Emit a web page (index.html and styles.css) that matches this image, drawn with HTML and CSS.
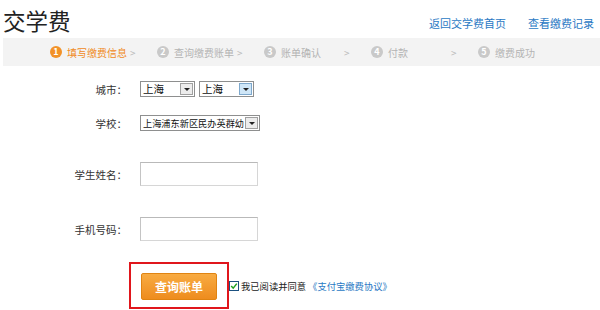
FILE: index.html
```html
<!DOCTYPE html>
<html lang="zh-CN">
<head>
    <meta charset="UTF-8">
    <title>交学费</title>
    <link rel="stylesheet" href="styles.css">
</head>
<body>
    <div class="header">
        <h1 class="title">交学费</h1>
        <div class="links">
            <a href="#">返回交学费首页</a>
            <a href="#">查看缴费记录</a>
        </div>
    </div>

    <div class="steps">
        <div class="step current"><span class="num">1</span><span class="name">填写缴费信息</span><span class="arrow">&gt;</span></div>
        <div class="step"><span class="num">2</span><span class="name">查询缴费账单</span><span class="arrow">&gt;</span></div>
        <div class="step"><span class="num">3</span><span class="name">账单确认</span><span class="arrow">&gt;</span></div>
        <div class="step"><span class="num">4</span><span class="name">付款</span><span class="arrow">&gt;</span></div>
        <div class="step"><span class="num">5</span><span class="name">缴费成功</span></div>
    </div>

    <div class="form">
        <div class="row row-city">
            <label>城市：</label>
            <div class="field">
                <span class="select w-city">上海<span class="btn"></span></span>
                <span class="select w-city">上海<span class="btn hover"></span></span>
            </div>
        </div>
        <div class="row row-school">
            <label>学校：</label>
            <div class="field">
                <span class="select w-school">上海浦东新区民办英群幼<span class="btn"></span></span>
            </div>
        </div>
        <div class="row row-input">
            <label>学生姓名：</label>
            <div class="field"><input type="text" class="text-input"></div>
        </div>
        <div class="row row-input">
            <label>手机号码：</label>
            <div class="field"><input type="text" class="text-input"></div>
        </div>
        <div class="submit-row">
            <div class="highlight">
                <button class="submit">查询账单</button>
            </div>
            <span class="check">
                <svg width="10" height="10" viewBox="0 0 10 10">
                    <rect x="0.5" y="0.5" width="9" height="9" fill="#fff" stroke="#1c5180"/>
                    <path d="M2.2 5 L4.2 7.2 L7.8 2.6" fill="none" stroke="#21a121" stroke-width="1.5"/>
                </svg>
            </span>
            <span class="agree">我已阅读并同意</span>
            <a href="#" class="agree-link">《支付宝缴费协议》</a>
        </div>
    </div>
</body>
</html>
```

FILE: styles.css
```css
body {
    margin: 0;
    padding: 0;
    font-family: "Noto Sans CJK SC", "Noto Sans", sans-serif;
    color: #333;
    background: #fff;
    width: 600px;
    height: 310px;
    overflow: hidden;
}
a {
    color: #2a79c4;
    text-decoration: none;
}
.header {
    height: 38px;
    display: flex;
    justify-content: space-between;
    align-items: flex-end;
}
.title {
    margin: 0 0 4px 3px;
    font-size: 22.5px;
    font-weight: 400;
    line-height: 28px;
    color: #222;
}
.links {
    display: flex;
    gap: 22px;
    padding: 0 6px 8px 0;
    font-size: 11px;
    line-height: 14px;
}
.steps {
    margin-left: 3px;
    height: 28px;
    background: #f3f3f3;
    display: flex;
    align-items: center;
    padding-left: 47px;
    font-size: 10px;
    color: #b4b4b4;
}
.step {
    width: 107px;
    display: flex;
    align-items: center;
    flex-shrink: 0;
}
.num {
    width: 12px;
    height: 12px;
    border-radius: 50%;
    background: #c9c9c9;
    color: #fff;
    font-size: 9px;
    font-weight: 700;
    line-height: 12px;
    text-align: center;
    margin-right: 5px;
    flex-shrink: 0;
}
.name {
    width: 63px;
    flex-shrink: 0;
    white-space: nowrap;
}
.arrow {
    font-size: 10px;
    color: #bbb;
}
.step.current .num {
    background: #f29228;
}
.step.current .name {
    color: #f08a24;
}
.form {
    font-size: 10.5px;
}
.row {
    display: flex;
    align-items: center;
}
.row label {
    width: 127px;
    text-align: right;
    margin-right: 13px;
    color: #333;
}
.row-city {
    margin-top: 15px;
    height: 16px;
}
.row-school {
    margin-top: 18px;
    height: 16px;
}
.row-input {
    margin-top: 31px;
    height: 24px;
}
.field {
    display: flex;
    gap: 4px;
}
.select {
    position: relative;
    display: inline-block;
    height: 14px;
    line-height: 14px;
    border: 1px solid #8e8f8f;
    background: #fff;
    font-size: 10.5px;
    padding-left: 2px;
    box-sizing: content-box;
    color: #111;
    white-space: nowrap;
    overflow: hidden;
}
.w-city {
    width: 51px;
}
.w-school {
    width: 116px;
    font-size: 9.2px;
}
.btn {
    position: absolute;
    right: 1px;
    top: 1px;
    width: 11px;
    height: 10px;
    border: 1px solid #a0a0a0;
    background: #ececec;
}
.btn::after {
    content: "";
    position: absolute;
    left: 3px;
    top: 4px;
    border-left: 3px solid transparent;
    border-right: 3px solid transparent;
    border-top: 3px solid #222;
}
.btn.hover {
    background: #cfe6f7;
    border-color: #7ea8cc;
}
.text-input {
    width: 116px;
    height: 22px;
    margin: 0;
    padding: 0;
    border: 1px solid #d6d6d6;
    border-top-color: #b9b9b9;
    border-left-color: #c4c4c4;
    box-sizing: content-box;
}
.submit-row {
    margin-top: 21px;
    padding-left: 129px;
    display: flex;
    align-items: center;
}
.highlight {
    width: 100px;
    height: 47px;
    border: 2px solid #e0161c;
    padding: 9px 0 0 10px;
    box-sizing: border-box;
}
.submit {
    width: 76px;
    height: 27px;
    border: 1px solid #e08412;
    border-radius: 2px;
    background: linear-gradient(#f8ab42, #ee8c1e);
    color: #fff;
    font-family: inherit;
    font-size: 12px;
    font-weight: 700;
    padding: 0;
    display: block;
}
.check {
    display: flex;
    margin: 0 2px 0 0;
}
.agree {
    font-size: 9.3px;
    color: #222;
}
.agree-link {
    font-size: 9.3px;
    margin-left: 2px;
}
```
